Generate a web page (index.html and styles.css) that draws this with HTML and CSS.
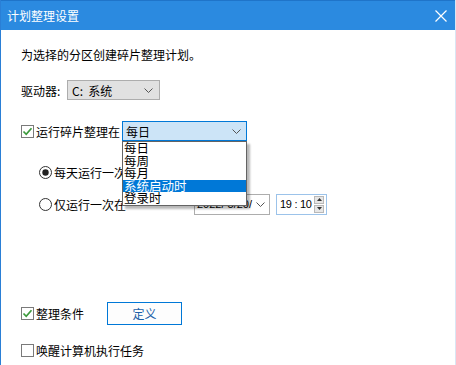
FILE: index.html
```html
<!DOCTYPE html>
<html lang="zh-CN">
<head>
<meta charset="utf-8">
<title>计划整理设置</title>
<link rel="stylesheet" href="styles.css">
</head>
<body>
<div class="window">
  <div class="titlebar">
    <span class="title">计划整理设置</span>
    <svg class="close" width="12" height="12" viewBox="0 0 12 12"><path d="M0.5 0.5 L11.5 11.5 M11.5 0.5 L0.5 11.5" stroke="#fff" stroke-width="1.2" fill="none"/></svg>
  </div>
  <div class="content">
    <p class="intro">为选择的分区创建碎片整理计划。</p>

    <div class="row drive-row">
      <span class="drive-label">驱动器:</span>
      <div class="select">
        <span>C:&nbsp; 系统</span>
        <svg class="chev" width="9" height="5" viewBox="0 0 9 5"><path d="M0.5 0.5 L4.5 4.5 L8.5 0.5" stroke="#555" stroke-width="1" fill="none"/></svg>
      </div>
    </div>

    <div class="row run-row">
      <svg class="cb" width="13" height="13" viewBox="0 0 13 13"><rect x="0.5" y="0.5" width="12" height="12" fill="#fff" stroke="#7a7a7a"/><path d="M2.5 6.5 L5.2 9.3 L10.5 3.2" stroke="#3c9a3c" stroke-width="1.7" fill="none"/></svg>
      <span class="run-label">运行碎片整理在</span>
      <div class="combo">
        <span>每日</span>
        <svg class="chev" width="9" height="5" viewBox="0 0 9 5"><path d="M0.5 0.5 L4.5 4.5 L8.5 0.5" stroke="#555" stroke-width="1" fill="none"/></svg>
        <ul class="list">
          <li>每日</li>
          <li>每周</li>
          <li>每月</li>
          <li class="sel">系统启动时</li>
          <li>登录时</li>
        </ul>
      </div>
    </div>

    <div class="row radio-row r1">
      <svg class="rb" width="13" height="13" viewBox="0 0 13 13"><circle cx="6.5" cy="6.5" r="6" fill="#fff" stroke="#333"/><circle cx="6.5" cy="6.5" r="3.2" fill="#222"/></svg>
      <span>每天运行一次</span>
    </div>

    <div class="row radio-row r2">
      <svg class="rb" width="13" height="13" viewBox="0 0 13 13"><circle cx="6.5" cy="6.5" r="6" fill="#fff" stroke="#333"/></svg>
      <span class="once-label">仅运行一次在</span>
      <div class="date">
        <span class="num">2022/ 5/20/</span>
        <svg class="chev" width="9" height="5" viewBox="0 0 9 5"><path d="M0.5 0.5 L4.5 4.5 L8.5 0.5" stroke="#555" stroke-width="1" fill="none"/></svg>
      </div>
      <div class="time">
        <span class="num tnum">19 : 10</span>
        <div class="spin">
          <div class="spin-btn"><svg width="5" height="3" viewBox="0 0 5 3"><path d="M0 3 L2.5 0 L5 3 Z" fill="#333"/></svg></div>
          <div class="spin-btn"><svg width="5" height="3" viewBox="0 0 5 3"><path d="M0 0 L2.5 3 L5 0 Z" fill="#333"/></svg></div>
        </div>
      </div>
    </div>

    <div class="row cond-row">
      <svg class="cb" width="13" height="13" viewBox="0 0 13 13"><rect x="0.5" y="0.5" width="12" height="12" fill="#fff" stroke="#7a7a7a"/><path d="M2.5 6.5 L5.2 9.3 L10.5 3.2" stroke="#3c9a3c" stroke-width="1.7" fill="none"/></svg>
      <span class="cond-label">整理条件</span>
      <button class="btn">定义</button>
    </div>

    <div class="row wake-row">
      <svg class="cb" width="13" height="13" viewBox="0 0 13 13"><rect x="0.5" y="0.5" width="12" height="12" fill="#fff" stroke="#7a7a7a"/></svg>
      <span>唤醒计算机执行任务</span>
    </div>
  </div>
</div>
</body>
</html>
```

FILE: styles.css
```css
* { box-sizing: border-box; }
html, body { margin: 0; padding: 0; background: #fff; }
body {
  font-family: "Noto Sans CJK SC", "Microsoft YaHei", sans-serif;
  font-size: 12px;
  color: #000;
}
.window {
  width: 456px;
  height: 365px;
  border-left: 1px solid #2a7fd6;
  border-right: 1px solid #d9e6f4;
  overflow: hidden;
}
.titlebar {
  height: 30px;
  background: #2b8ae0;
  border-top: 1px solid #1f74c9;
  display: flex;
  align-items: center;
  justify-content: space-between;
  padding: 0 8px 0 6px;
  color: #fff;
}
.title { font-size: 12px; line-height: 16px; }
.close { display: block; }
.content {
  padding-left: 20px;
  display: flex;
  flex-direction: column;
}
.intro { margin: 17px 0 0; line-height: 16px; }
.row { display: flex; align-items: center; white-space: nowrap; }
.num {
  white-space: pre;
  font-family: "Liberation Sans", "Noto Sans CJK SC", sans-serif;
  font-size: 11px;
  flex: none;
}
.tnum { letter-spacing: -0.3px; }
.drive-row { margin-top: 17px; height: 20px; }
.drive-label { width: 46px; }
.select {
  width: 93px;
  height: 20px;
  background: #e1e1e1;
  border: 1px solid #adadad;
  display: flex;
  align-items: center;
  justify-content: space-between;
  padding: 0 6px 0 4px;
}
.chev { display: block; flex: none; }
.run-row { margin-top: 21px; height: 20px; }
.cb, .rb { display: block; flex: none; }
.run-label { margin-left: 2px; width: 86px; }
.combo {
  position: relative;
  width: 125px;
  height: 20px;
  background: #cce4f7;
  border: 1px solid #0078d7;
  display: flex;
  align-items: center;
  justify-content: space-between;
  padding: 0 5px 0 3px;
}
.list {
  position: absolute;
  left: -1px;
  top: 19px;
  width: 125px;
  margin: 0;
  padding: 0;
  list-style: none;
  background: #fff;
  border: 1px solid #646464;
  box-shadow: 3px 3px 2px rgba(0,0,0,0.28);
  z-index: 10;
}
.list li {
  height: 12.6px;
  line-height: 12.6px;
  font-size: 12.5px;
  padding-left: 1px;
}
.list li.sel { background: #0078d7; color: #fff; }
.radio-row { padding-left: 18px; height: 20px; }
.radio-row .rb { margin-right: 2px; }
.r1 { margin-top: 21px; }
.r2 { margin-top: 12px; }
.once-label { width: 140px; flex: none; }
.date {
  flex: none;
  width: 76px;
  height: 21px;
  border: 1px solid #adadad;
  display: flex;
  align-items: center;
  justify-content: space-between;
  padding: 0 4px 0 2px;
  overflow: hidden;
}
.time {
  flex: none;
  margin-left: 6px;
  width: 51px;
  height: 21px;
  border: 1px solid #9cc3ea;
  display: flex;
  align-items: center;
  justify-content: space-between;
  padding: 0 2px 0 3px;
}
.spin { display: flex; flex-direction: column; gap: 1px; flex: none; }
.spin-btn {
  width: 10px;
  height: 8px;
  background: #e6e6e6;
  border: 1px solid #b8b8b8;
  display: flex;
  align-items: center;
  justify-content: center;
}
.spin-btn svg { display: block; }
.cond-row { margin-top: 88px; height: 23px; }
.cond-label { margin-left: 2px; width: 71px; }
.btn {
  width: 75px;
  height: 23px;
  background: #fdfdfd;
  border: 1px solid #0078d7;
  font-family: inherit;
  font-size: 12px;
  color: #1c5fa8;
  padding: 0;
  margin: 0;
}
.wake-row { margin-top: 17px; height: 16px; }
.wake-row span { margin-left: 2px; }
```
